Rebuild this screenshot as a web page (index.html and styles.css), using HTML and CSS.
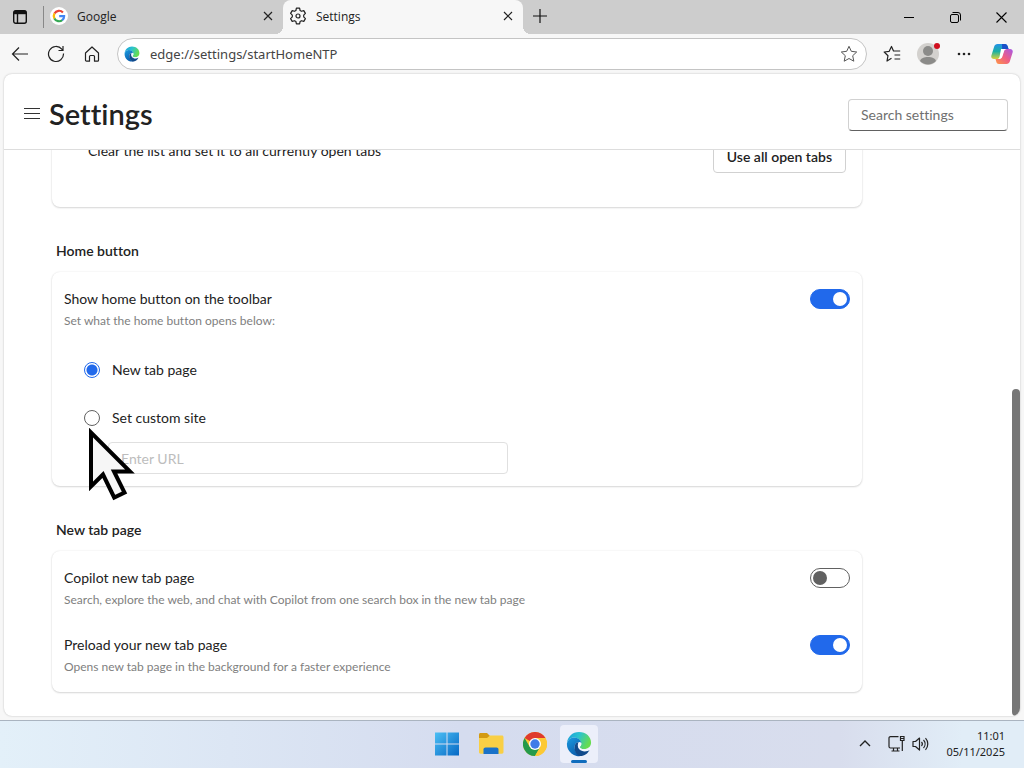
FILE: index.html
```html
<!doctype html>
<html lang="en">
    <head>
        <meta charset="UTF-8" />
        <meta name="viewport" content="width=device-width, initial-scale=1.0" />
        <title>Settings</title>
        <link rel="stylesheet" href="styles.css">
    </head>
    <body>
        <!-- tab strip -->
        <header class="tabstrip">
            <button class="tab-actions" aria-label="Tab actions">
                <svg width="16" height="16" viewBox="0 0 16 16" fill="none" stroke="#111" stroke-width="1.4">
                    <rect x="1.7" y="1.7" width="12.6" height="12.6" rx="2" />
                    <path d="M2 3.5h12" stroke-width="3.4" />
                    <path d="M5.5 5v9" />
                </svg>
            </button>
            <div class="tab first">
                <svg width="18" height="18" viewBox="0 0 18 18" fill="none" stroke-width="2.2">
                    <circle cx="9" cy="9" r="9" fill="#fff" />
                    <path d="M12.9 5.4A5.2 5.2 0 0 0 4.5 6.5" stroke="#ea4335" />
                    <path d="M4.5 6.4a5.2 5.2 0 0 0 0 5.2" stroke="#fbbc05" />
                    <path d="M4.4 11.4a5.2 5.2 0 0 0 8 1.6" stroke="#34a853" />
                    <path d="M12.2 13.2A5 5 0 0 0 14.1 9.2H9.2" stroke="#4285f4" />
                </svg>
                <span class="tab-title">Google</span>
                <button class="tab-close" aria-label="Close tab">
                    <svg width="10" height="10" viewBox="0 0 10 10" stroke="#222" stroke-width="1.2"><path d="M1 1l8 8M9 1L1 9" /></svg>
                </button>
            </div>
            <div class="tab active">
                <svg width="18" height="18" viewBox="0 0 18 18" fill="none" stroke="#222" stroke-width="1.2" stroke-linejoin="round">
                    <path d="M7.4 1.2h3.2l.5 2.3 1.4.8 2.3-.7 1.6 2.8-1.7 1.7v1.8l1.7 1.7-1.6 2.8-2.3-.7-1.4.8-.5 2.3H7.4l-.5-2.3-1.4-.8-2.3.7-1.6-2.8 1.7-1.7V8.1L1.6 6.4l1.6-2.8 2.3.7 1.4-.8z" />
                    <circle cx="9" cy="9" r="2" />
                </svg>
                <span class="tab-title">Settings</span>
                <button class="tab-close" aria-label="Close tab">
                    <svg width="10" height="10" viewBox="0 0 10 10" stroke="#222" stroke-width="1.2"><path d="M1 1l8 8M9 1L1 9" /></svg>
                </button>
            </div>
            <button class="new-tab" aria-label="New tab">
                <svg width="14" height="14" viewBox="0 0 14 14" stroke="#111" stroke-width="1.2"><path d="M7 0v14M0 7h14" /></svg>
            </button>
            <div class="window-controls">
                <button aria-label="Minimize">
                    <svg width="10" height="10" viewBox="0 0 10 10" stroke="#000"><path d="M0 5.5h10" /></svg>
                </button>
                <button aria-label="Restore">
                    <svg width="11" height="11" viewBox="0 0 11 11" fill="none" stroke="#000"><rect x=".5" y="2.5" width="8" height="8" rx="1.5" /><path d="M2.5.5H8A2.5 2.5 0 0 1 10.5 3v5.5" /></svg>
                </button>
                <button aria-label="Close">
                    <svg width="11" height="11" viewBox="0 0 11 11" stroke="#000" stroke-width="1.1"><path d="M.5.5l10 10M10.5.5l-10 10" /></svg>
                </button>
            </div>
        </header>

        <!-- toolbar -->
        <nav class="toolbar">
            <button class="tool" aria-label="Back">
                <svg width="18" height="16" viewBox="0 0 18 16" fill="none" stroke="#222" stroke-width="1.2"><path d="M8 1.5L1.5 8 8 14.5M1.5 8H17" /></svg>
            </button>
            <button class="tool" aria-label="Refresh">
                <svg width="18" height="18" viewBox="0 0 18 18" fill="none" stroke="#222" stroke-width="1.2"><path d="M16.5 8.5A7.5 7.5 0 1 1 14.8 4.2L16 5.5M16 1v4.5h-4.5" /></svg>
            </button>
            <button class="tool" aria-label="Home">
                <svg width="16" height="16" viewBox="0 0 16 16" fill="none" stroke="#222" stroke-width="1.2" stroke-linejoin="round"><path d="M1.5 7L8 1l6.5 6v7.2a1 1 0 0 1-1 1h-3V10.5a1 1 0 0 0-1-1h-3a1 1 0 0 0-1 1v4.7h-3a1 1 0 0 1-1-1z" /></svg>
            </button>
            <div class="address">
                <svg width="16" height="16" viewBox="0 0 28 28"><use href="#edge" /></svg>
                <input type="text" aria-label="Address bar" value="edge://settings/startHomeNTP" />
                <button class="star" aria-label="Add to favorites">
                    <svg width="18" height="18" viewBox="0 0 18 18" fill="none" stroke="#555" stroke-linejoin="round"><path d="M9 1.3l2.3 5 5.4.7-4 3.7 1.1 5.5L9 13.5l-4.8 2.7 1.1-5.5-4-3.7 5.4-.7z" /></svg>
                </button>
            </div>
            <button class="tool" aria-label="Favorites">
                <svg width="18" height="18" viewBox="0 0 18 18" fill="none" stroke="#222" stroke-width="1.2" stroke-linejoin="round"><path d="M8.5 13.2L4 16l1-5.3L1.2 7l5-.7L8.5 1.5l2 4.5h6.7M11.5 10h5.7M11.5 14h5.7" /></svg>
            </button>
            <button class="tool profile" aria-label="Profile">
                <svg width="22" height="22" viewBox="0 0 22 22">
                    <circle cx="11" cy="11" r="11" fill="#d3d1ce" />
                    <circle cx="11" cy="8" r="5" fill="#8b8b89" />
                    <path d="M3 18c1-3 4-4 8-4s7 1 8 4a11 11 0 0 1-16 0z" fill="#8b8b89" />
                </svg>
                <span class="dot"></span>
            </button>
            <button class="tool" aria-label="Settings and more">
                <svg width="14" height="4" viewBox="0 0 14 4" fill="#222"><circle cx="2" cy="2" r="1.3" /><circle cx="7" cy="2" r="1.3" /><circle cx="12" cy="2" r="1.3" /></svg>
            </button>
            <button class="tool copilot" aria-label="Copilot">
                <svg width="22" height="20" viewBox="0 0 22 20">
                    <defs>
                        <linearGradient id="cp1" x1="0" y1="0" x2="0" y2="1"><stop offset="0" stop-color="#2391e8" /><stop offset=".5" stop-color="#1bb0a2" /><stop offset="1" stop-color="#d8d13b" /></linearGradient>
                        <linearGradient id="cp2" x1="1" y1="0" x2="0" y2="1"><stop offset="0" stop-color="#a558e8" /><stop offset=".5" stop-color="#ee5d86" /><stop offset="1" stop-color="#ff9944" /></linearGradient>
                    </defs>
                    <path d="M6.5 0H14c1.5 0 2.3 1 2.7 2.3l.8 2.7H14c-1.5 0-2.4.8-2.8 2.2L9.500 12.500C9 14 8 15 6.500 15H3C.8 15-.2 13.500.4 11.500l2.800-9C3.700 1 4.800 0 6.500 0z" fill="url(#cp1)" />
                    <path d="M11 0h3c1.5 0 2.3 1 2.7 2.3l.8 2.7H14c-1.5 0-2.4.8-2.8 2.2z" fill="#1b50c8" />
                    <path d="M15.5 20H8c-1.5 0-2.3-1-2.7-2.3L4.5 15H8c1.5 0 2.4-.8 2.8-2.2l1.7-5.3C13 6 14 5 15.5 5H19c2.2 0 3.200 1.500 2.600 3.500l-2.800 9c-.5 1.500-1.600 2.500-3.300 2.500z" fill="url(#cp2)" />
                    <path d="M10 5h6c-2 .3-2.600 1.200-3 2.500l-1.600 5c-.5 1.500-1.300 2.500-4.400 2.500 1-.6 1.300-1.400 1.600-2.500z" fill="#fff" />
                </svg>
            </button>
        </nav>

        <!-- settings page -->
        <main class="page">
            <div class="page-header">
                <button class="menu" aria-label="Menu">
                    <svg width="16" height="12" viewBox="0 0 16 12" stroke="#333"><path d="M0 .5h16M0 5.5h16M0 10.5h16" /></svg>
                </button>
                <h1>Settings</h1>
                <input class="search" type="search" placeholder="Search settings" aria-label="Search settings" />
            </div>

            <div class="content">
                <section class="card tabs-card">
                    <p>Clear the list and set it to all currently open tabs</p>
                    <button class="outlined">Use all open tabs</button>
                </section>

                <h2>Home button</h2>
                <section class="card">
                    <div class="row">
                        <label for="show-home">Show home button on the toolbar</label>
                        <input class="toggle" type="checkbox" role="switch" id="show-home" checked />
                        <p class="sub">Set what the home button opens below:</p>
                    </div>
                    <div class="options">
                        <label class="option"><input type="radio" name="home" checked /> New tab page</label>
                        <label class="option"><input type="radio" name="home" /> Set custom site</label>
                        <input class="url" type="text" placeholder="Enter URL" aria-label="Custom site URL" />
                        <svg class="cursor" width="46" height="73" viewBox="0 0 46 73"><path d="M2 4.5V58.5L14 46.5L25.2 69.5L35.5 64.5L25 43.5H41z" fill="#f6f6f6" stroke="#000" stroke-width="4" /></svg>
                    </div>
                </section>

                <h2>New tab page</h2>
                <section class="card">
                    <div class="row">
                        <label for="copilot-tab">Copilot new tab page</label>
                        <input class="toggle" type="checkbox" role="switch" id="copilot-tab" />
                        <p class="sub">Search, explore the web, and chat with Copilot from one search box in the new tab page</p>
                    </div>
                    <div class="row">
                        <label for="preload">Preload your new tab page</label>
                        <input class="toggle" type="checkbox" role="switch" id="preload" checked />
                        <p class="sub">Opens new tab page in the background for a faster experience</p>
                    </div>
                </section>
            </div>
            <div class="scroll-thumb"></div>
        </main>

        <!-- taskbar -->
        <footer class="taskbar">
            <div class="apps">
                <button aria-label="Start">
                    <svg width="24" height="24" viewBox="0 0 24 24">
                        <defs><linearGradient id="win" gradientUnits="userSpaceOnUse" x1="0" y1="0" x2="24" y2="24"><stop offset="0" stop-color="#4cc0f5" /><stop offset="1" stop-color="#0567c4" /></linearGradient></defs>
                        <path d="M0 .5h11.5v11H0zM12.5.5H24v11H12.5zM0 12.5h11.5v11H0zM12.5 12.5H24v11H12.5z" fill="url(#win)" />
                    </svg>
                </button>
                <button aria-label="File Explorer">
                    <svg width="26" height="24" viewBox="0 0 26 24">
                        <path d="M1 2.5C1 1.6 1.6 1 2.5 1H9l3 3v4H1z" fill="#d39a12" />
                        <path d="M1 6h8l3-2.5h12c.8 0 1.500.7 1.500 1.500v15c0 1-.6 1.700-1.500 1.700H2.500C1.600 21.700 1 21 1 20z" fill="#f9cf45" />
                        <path d="M5.500 22v-4.500c0-1.200.8-2 2-2h11c1.200 0 2 .8 2 2V22z" fill="#1a72c9" />
                    </svg>
                </button>
                <button aria-label="Chrome">
                    <svg width="24" height="24" viewBox="0 0 24 24">
                        <circle cx="12" cy="12" r="12" fill="#fcc934" />
                        <path d="M12 12L1.6 6A12 12 0 0 1 22.4 6H12z" fill="#df3a2d" />
                        <path d="M1.6 6A12 12 0 0 0 12 24l5.2-9L12 12 6.8 15z" fill="#259a4b" />
                        <path d="M17.2 15L12 24A12 12 0 0 0 22.4 6H12z" fill="#fcc934" />
                        <circle cx="12" cy="12" r="6" fill="#fff" />
                        <circle cx="12" cy="12" r="4.7" fill="#3f7be8" />
                    </svg>
                </button>
                <button class="running" aria-label="Microsoft Edge">
                    <svg width="26" height="26" viewBox="0 0 28 28">
                        <defs>
                            <linearGradient id="edge-top" x1="0" y1="0" x2="1" y2=".4"><stop offset="0" stop-color="#189bdb" /><stop offset=".5" stop-color="#2bc3cf" /><stop offset="1" stop-color="#66dc50" /></linearGradient>
                            <linearGradient id="edge-left" x1="0" y1="0" x2=".6" y2="1"><stop offset="0" stop-color="#1c9be0" /><stop offset="1" stop-color="#0b5cab" /></linearGradient>
                            <g id="edge">
                                <path d="M1 13.5C1.5 6 7 1 14 1c7.5 0 13 5 13 11.5 0 4.5-3.5 7-7.5 7-3 0-5-1.2-4.5-2.5.5-1 1.5-1.5 1.5-3.5C16.5 10 12.5 7 8.500 7 5 7 2 9.500 1 13.500z" fill="url(#edge-top)" />
                                <path d="M1 13.5C2 9.500 5 7 8.500 7c4.500 0 8 3 8 6.500-2-2.500-6-1.500-7 2-1.200 5 2.500 10.500 8 11.200A13 13 0 0 1 1 13.500z" fill="url(#edge-left)" />
                                <path d="M9.5 15.5c.6-2 2.300-3.300 4.300-3.300-1.300 2-.8 5 1.200 7 2.800 2.800 7 2.600 10.500.8-2 4.500-5.500 7-10 7-4.500-1-7.200-6.500-6-11.500z" fill="#114a8b" />
                                <path d="M16.5 13.5c0-1.300-1.600-2-2.900-1.100-1.300 1.500-1.300 5.300.7 7.300 3 3 8 2.800 11.900.6l.5-2.800c-2 1.700-4.700 2.300-7.200 2.300-3 0-5-1.200-4.500-2.500.5-1 1.500-1.500 1.500-3.500z" fill="#f3f7fd" />
                            </g>
                        </defs>
                        <use href="#edge" />
                    </svg>
                </button>
            </div>
            <div class="tray">
                <button aria-label="Show hidden icons">
                    <svg width="12" height="7" viewBox="0 0 12 7" fill="none" stroke="#222" stroke-width="1.4"><path d="M1 6l5-5 5 5" /></svg>
                </button>
                <button class="status" aria-label="Network and volume">
                    <svg width="17" height="17" viewBox="0 0 17 17" fill="none" stroke="#222" stroke-width="1.2"><path d="M10.5 1.6H2.5a1.5 1.5 0 0 0-1.5 1.5v8.4A1.5 1.5 0 0 0 2.5 13h9.5M5.5 13v3M9.5 13v3M3.5 16h8M12.5 1.5h3.5v4h-3.5zM14.3 5.5V16M12.5 3.5h3.5" /></svg>
                    <svg width="17" height="16" viewBox="0 0 17 16" fill="none" stroke="#222" stroke-width="1.2" stroke-linejoin="round"><path d="M1 5.5v5h2.5L7.500 14V2L3.500 5.500zM9.500 6a3 3 0 0 1 0 4M11.500 4a6 6 0 0 1 0 8M13.500 2.200a8.500 8.500 0 0 1 0 11.600" /></svg>
                </button>
                <div class="clock">
                    <time>11:01</time>
                    <time datetime="2025-11-05">05/11/2025</time>
                </div>
            </div>
        </footer>
    </body>
</html>
```
FILE: styles.css
```css
* {
    box-sizing: border-box;
}

body,
html {
    height: 100%;
    margin: 0;
}

body {
    display: flex;
    flex-direction: column;
    overflow: hidden;
    background-color: #f7f7f7;
    color: #222;
    font-family: "Open Sans", "Noto Sans", sans-serif;
    font-size: 12px;
}

h1, h2, p {
    margin: 0;
}

button {
    display: flex;
    align-items: center;
    justify-content: center;
    flex-shrink: 0;
    padding: 0;
    border: none;
    background: transparent;
    color: inherit;
    font: inherit;
}

input {
    font: inherit;
    color: inherit;
}

/* tab strip */
.tabstrip {
    display: flex;
    height: 34px;
    flex-shrink: 0;
    background-color: #cdcdcd;
}

.tab-actions {
    width: 40px;
    margin-right: 3px;
}

.tab {
    display: flex;
    align-items: center;
    width: 240px;
    padding: 0 10px 2px 6px;
}

.tab.first {
    border-left: 1px solid #888;
    border-image: linear-gradient(transparent 20%, #888 20%, #888 80%, transparent 80%) 1;
}

.tab.active {
    position: relative;
    background-color: #f7f7f7;
    border-radius: 8px 8px 0 0;
}

.tab.active::before,
.tab.active::after {
    content: "";
    position: absolute;
    bottom: 0;
    width: 8px;
    height: 8px;
}

.tab.active::before {
    left: -8px;
    background: radial-gradient(circle at 0 0, transparent 8px, #f7f7f7 8px);
}

.tab.active::after {
    right: -8px;
    background: radial-gradient(circle at 100% 0, transparent 8px, #f7f7f7 8px);
}

.tab-title {
    flex: 1;
    margin-left: 9px;
}

.new-tab {
    width: 34px;
    padding-bottom: 2px;
}

.window-controls {
    display: flex;
    margin-left: auto;
}

.window-controls button {
    width: 46px;
}

/* toolbar */
.toolbar {
    display: flex;
    align-items: center;
    height: 40px;
    flex-shrink: 0;
    padding: 0 2px;
}

.tool {
    width: 36px;
    height: 32px;
}

.tool.copilot {
    width: 40px;
}

.address {
    display: flex;
    align-items: center;
    flex: 1;
    height: 32px;
    margin: 0 7px;
    padding: 0 8px 0 6px;
    border: 1px solid #c4c4c4;
    border-radius: 16px;
    background-color: #fff;
}

.address input {
    flex: 1;
    margin-left: 10px;
    padding: 0;
    border: none;
    outline: none;
    background: transparent;
    color: #444;
    font-family: "Noto Sans", sans-serif;
    font-size: 13px;
}

.profile {
    position: relative;
}

.profile .dot {
    position: absolute;
    top: 5px;
    right: 6px;
    width: 6px;
    height: 6px;
    border-radius: 50%;
    background-color: #d00f1f;
}

/* page */
.page {
    position: relative;
    display: flex;
    flex-direction: column;
    flex: 1;
    min-height: 0;
    margin: 0 4px 4px;
    border-radius: 8px;
    background-color: #fff;
    box-shadow: 0 0 2px rgba(0, 0, 0, 0.25);
    font-family: Lato, sans-serif;
    font-size: 14px;
    line-height: 20px;
    font-variant-ligatures: none;
    overflow: hidden;
}

.page-header {
    display: flex;
    align-items: center;
    height: 76px;
    flex-shrink: 0;
    padding: 6px 12px 0 20px;
    border-bottom: 1px solid #ddd;
}

.menu,
.page-header h1 {
    padding-bottom: 2px;
}

.page-header h1 {
    margin-left: 9px;
    font-size: 29px;
    line-height: 36px;
    font-weight: 600;
}

.search {
    width: 160px;
    height: 32px;
    margin-left: auto;
    padding: 0 12px;
    border: 1px solid #d1d1d1;
    border-bottom-color: #616161;
    border-radius: 4px;
    background-color: #fff;
}

.search::placeholder {
    color: #707070;
}

/* content is kept at the end of its scroll */
.content {
    display: flex;
    flex-direction: column;
    justify-content: flex-end;
    flex: 1;
    min-height: 0;
    max-width: 906px;
    padding: 0 48px 24px;
    overflow: hidden;
}

.content h2 {
    margin: 34px 4px 11px;
    font-size: 14px;
    line-height: 20px;
    font-weight: 600;
}

.card {
    display: flex;
    flex-direction: column;
    gap: 27px;
    flex-shrink: 0;
    padding: 17px 12px;
    border-radius: 8px;
    background-color: #fff;
    box-shadow: 0 0 2px rgba(0, 0, 0, 0.1), 0 1px 2px rgba(0, 0, 0, 0.14);
}

.tabs-card {
    flex-direction: row;
    align-items: flex-start;
    justify-content: space-between;
    padding: 16px 16px 34px 36px;
}

.outlined {
    height: 32px;
    padding: 0 13px;
    border: 1px solid #d1d1d1;
    border-radius: 4px;
    background-color: #fff;
    font-weight: 600;
}

.row {
    display: grid;
    grid-template-columns: 1fr auto;
    row-gap: 4px;
}

.sub {
    color: #808080;
    font-size: 12px;
    line-height: 16px;
}

.toggle {
    appearance: none;
    display: flex;
    align-items: center;
    width: 40px;
    height: 20px;
    margin: 0;
    padding: 0 2px;
    border: 1px solid #616161;
    border-radius: 10px;
}

.toggle::before {
    content: "";
    width: 14px;
    height: 14px;
    border-radius: 50%;
    background-color: #616161;
}

.toggle:checked {
    justify-content: flex-end;
    border-color: #2169eb;
    background-color: #2169eb;
}

.toggle:checked::before {
    background-color: #fff;
}

.options {
    position: relative;
    display: flex;
    flex-direction: column;
    gap: 28px;
    margin: 4px 0 -5px;
    padding-left: 20px;
}

.option {
    display: flex;
    align-items: center;
    gap: 12px;
}

.option input {
    appearance: none;
    width: 16px;
    height: 16px;
    margin: 0;
    border: 1px solid #616161;
    border-radius: 50%;
}

.option input:checked {
    border-color: #2169eb;
    background: radial-gradient(circle, #2169eb 5px, transparent 6px);
}

.url {
    width: 400px;
    height: 32px;
    margin: -14px 0 0 24px;
    padding: 0 12px;
    border: 1px solid #e0e0e0;
    border-radius: 4px;
    background-color: #fff;
}

.url::placeholder {
    color: #bdbdbd;
}

.cursor {
    position: absolute;
    left: 25px;
    top: 68px;
}

.scroll-thumb {
    position: absolute;
    right: 0;
    bottom: 0;
    width: 8px;
    height: 51%;
    border-radius: 4px;
    background-color: #767676;
}

/* taskbar */
.taskbar {
    display: grid;
    grid-template-columns: 1fr auto 1fr;
    align-items: center;
    height: 48px;
    flex-shrink: 0;
    padding: 0 0 2px 2px;
    border-top: 1px solid #aab4c0;
    background: linear-gradient(90deg, #e3f0f9, #d5dcef 45%, #d8dded 82%, #e1edf7 94%);
}

.apps {
    grid-column: 2;
    display: flex;
    gap: 6px;
}

.apps button {
    width: 38px;
    height: 38px;
    border-radius: 4px;
}

.apps .running {
    position: relative;
    background-color: #eceffa;
}

.running::after {
    content: "";
    position: absolute;
    bottom: 0;
    width: 16px;
    height: 3px;
    border-radius: 2px;
    background-color: #0f6cbd;
}

.tray {
    display: flex;
    align-items: center;
    justify-content: flex-end;
    gap: 17px;
    padding-right: 19px;
}

.status {
    gap: 7px;
}

.clock {
    display: flex;
    flex-direction: column;
    align-items: flex-end;
    font-family: "Noto Sans", sans-serif;
    font-size: 11px;
    line-height: 16px;
}
```
